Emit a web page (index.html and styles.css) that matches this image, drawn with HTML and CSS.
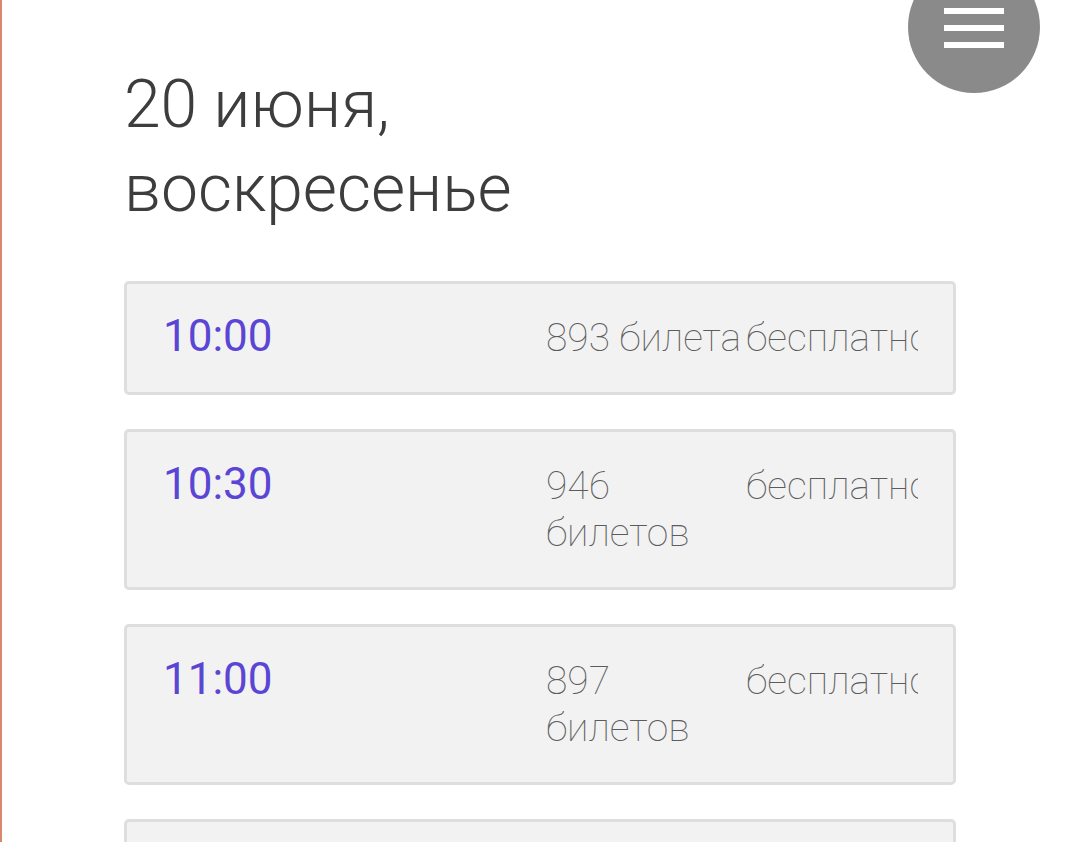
FILE: index.html
```html
<!DOCTYPE html>
<html lang="ru">
<head>
<meta charset="utf-8">
<title>Расписание</title>
<link rel="stylesheet" href="styles.css">
</head>
<body>
<div class="page">
  <button class="menu-btn" aria-label="Меню">
    <span class="bar"></span>
    <span class="bar"></span>
    <span class="bar"></span>
  </button>
  <main class="content">
    <h1 class="day-title">20 июня,<br>воскресенье</h1>
    <ul class="sessions">
      <li class="session">
        <div class="time">10:00</div>
        <div class="tickets">893 билета</div>
        <div class="price">бесплатно</div>
      </li>
      <li class="session">
        <div class="time">10:30</div>
        <div class="tickets">946 билетов</div>
        <div class="price">бесплатно</div>
      </li>
      <li class="session">
        <div class="time">11:00</div>
        <div class="tickets">897 билетов</div>
        <div class="price">бесплатно</div>
      </li>
      <li class="session">
        <div class="time">11:30</div>
        <div class="tickets">912 билетов</div>
        <div class="price">бесплатно</div>
      </li>
    </ul>
  </main>
</div>
</body>
</html>
```

FILE: styles.css
```css
html, body {
  margin: 0;
  padding: 0;
  background: #ffffff;
}

body {
  font-family: Roboto, "Noto Sans", "DejaVu Sans", sans-serif;
  color: #3d3d3d;
  overflow: hidden;
}

.page {
  min-height: 100vh;
  border-left: 2px solid #d98870;
  box-sizing: border-box;
}

.menu-btn {
  position: absolute;
  top: -39px;
  left: 908px;
  width: 132px;
  height: 132px;
  border: none;
  border-radius: 50%;
  background: #8a8a8a;
  padding: 47px 0 0 0;
  display: flex;
  flex-direction: column;
  align-items: center;
  gap: 11px;
  cursor: pointer;
}

.menu-btn .bar {
  display: block;
  width: 60px;
  height: 6px;
  background: #ffffff;
}

.content {
  padding: 63px 0 0 122px;
  width: 832px;
}

.day-title {
  margin: 0 0 50px 0;
  font-size: 66px;
  line-height: 84px;
  font-weight: 300;
  color: #3d3d3d;
}

.sessions {
  list-style: none;
  margin: 0;
  padding: 0;
  display: flex;
  flex-direction: column;
  gap: 34px;
}

.session {
  display: flex;
  align-items: flex-start;
  background: #f2f2f2;
  border: 3px solid #dedede;
  border-radius: 5px;
  padding: 29px 35px 30px 36px;
}

.time {
  flex: 1;
  font-size: 44px;
  line-height: 47px;
  font-weight: 400;
  color: #5a45d4;
}

.tickets,
.price {
  padding-top: 2px;
  font-family: "Roboto Thin", Roboto, "Noto Sans", sans-serif;
  font-size: 39px;
  line-height: 47px;
  font-weight: 100;
  color: #5c5c5c;
}

.tickets {
  width: 200px;
}

.price {
  width: 172px;
  overflow: hidden;
  white-space: nowrap;
}
```
